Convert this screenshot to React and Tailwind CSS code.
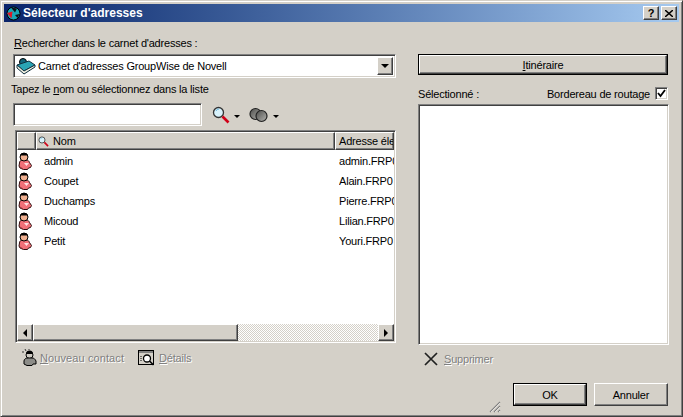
import React from "react";

const FONT = { fontFamily: '"Liberation Sans", Arial, sans-serif' };

// Bords en relief façon Windows 2000
const sunken =
  "border border-t-[#808080] border-l-[#808080] border-r-white border-b-white shadow-[inset_1px_1px_0_#404040,inset_-1px_-1px_0_#d4d0c8]";
const raised =
  "bg-[#d4d0c8] border border-t-white border-l-white border-r-[#404040] border-b-[#404040] shadow-[inset_-1px_-1px_0_#808080]";

const Contact = () => (
  <svg width="16" height="18" viewBox="0 0 16 18">
    <path d="M2.500 11c0-2 1.500-3 3-3h3.500c2 0 3 1 3.500 2.500l2 3-1 2-2 .5-1 1.500h-4l-3.500-1.500-1-2z" fill="#f07078" stroke="#301010" />
    <circle cx="7" cy="5" r="4" fill="#f0b090" stroke="#000" />
    <path d="M3 5a4 4 0 0 1 8 0l-1-1.500h-6z" fill="#000" />
    <path d="M7 11h5l-2.500 3z" fill="#ffe0e0" />
    <path d="M3 15l3 2" stroke="#a03038" />
  </svg>
);

const Magnifier = ({ size = 18 }) => (
  <svg width={size} height={size} viewBox="0 0 18 18">
    <circle cx="6.500" cy="6.500" r="5" fill="#d8f2fb" stroke="#333" strokeWidth="1.300" />
    <path d="M4 5a3 3 0 0 1 3-2" stroke="#6cb8dc" fill="none" />
    <path d="M10.500 10.500l6 6" stroke="#d00018" strokeWidth="2.600" />
  </svg>
);

const Circles = () => (
  <svg width="20" height="16" viewBox="0 0 20 16">
    <defs>
      <linearGradient id="anneau" x1="0" y1="0" x2="1" y2="1">
        <stop offset="0" stopColor="#4c4c4a" />
        <stop offset="1" stopColor="#b4b4b0" />
      </linearGradient>
    </defs>
    <circle cx="6.500" cy="7" r="5.500" fill="url(#anneau)" stroke="#222" strokeWidth="1.200" />
    <circle cx="12.500" cy="9" r="5.500" fill="url(#anneau)" stroke="#222" strokeWidth="1.200" />
  </svg>
);

const Caret = () => <span className="ml-[4px] mt-[3px] w-0 h-0 border-x-[3px] border-x-transparent border-t-[3px] border-t-black" />;

const Arrow = ({ dir }) => (
  <span
    className={
      dir === "left"
        ? "w-0 h-0 border-y-4 border-y-transparent border-r-4 border-r-black"
        : "w-0 h-0 border-y-4 border-y-transparent border-l-4 border-l-black"
    }
  />
);

const DisabledText = ({ children }) => (
  <span className="text-[#808080] [text-shadow:1px_1px_0_#ffffff]">{children}</span>
);

const rows = [
  ["admin", "admin.FRP0"],
  ["Coupet", "Alain.FRP0"],
  ["Duchamps", "Pierre.FRP0"],
  ["Micoud", "Lilian.FRP0"],
  ["Petit", "Youri.FRP0"],
];

export default function App() {
  return (
    <div
      style={FONT}
      className="w-[683px] h-[417px] flex flex-col bg-[#d4d0c8] text-[11px] tracking-[-0.2px] leading-[14px] text-black border border-t-[#d4d0c8] border-l-[#d4d0c8] border-r-[#404040] border-b-[#404040] shadow-[inset_1px_1px_0_#ffffff,inset_-1px_-1px_0_#808080] overflow-hidden"
    >
      {/* Barre de titre */}
      <div className="mx-[3px] mt-[3px] h-[18px] shrink-0 flex items-center bg-gradient-to-r from-[#0a246a] to-[#a6caf0] pl-[2px] pr-[2px]">
        <svg width="15" height="15" viewBox="0 0 15 15">
          <circle cx="7.500" cy="7.500" r="6.500" fill="#18a8b8" stroke="#000" />
          <path d="M1 7l5.500-1.500-1 7z" fill="#e01828" />
          <path d="M5 1.500l6 1-2 4z" fill="#101018" />
          <path d="M9 9l4.500-1-2 4z" fill="#101018" />
        </svg>
        <span className="ml-[2px] flex-1 text-white font-bold text-[12px] tracking-normal">Sélecteur d'adresses</span>
        <div className={`w-4 h-[14px] flex items-center justify-center text-[11px] font-bold ${raised}`}>?</div>
        <div className={`ml-[2px] w-4 h-[14px] flex items-center justify-center ${raised}`}>
          <svg width="8" height="7" viewBox="0 0 8 7">
            <path d="M0 0l8 7M8 0l-8 7" stroke="#000" strokeWidth="1.500" />
          </svg>
        </div>
      </div>

      <div className="flex-1 flex pl-[12px] pr-[13px] pt-[14px] relative">
        {/* Colonne gauche */}
        <div className="w-[383px] flex flex-col">
          <div className="ml-[1px] h-[14px]">
            <span className="underline">R</span>echercher dans le carnet d'adresses :
          </div>
          <div className={`mt-[4px] h-6 flex items-center bg-white pl-[2px] pr-[2px] ${sunken}`}>
            <svg width="20" height="18" viewBox="0 0 20 18">
              <circle cx="7" cy="5" r="3.500" fill="#12667c" stroke="#000" />
              <path d="M1 8l7 6 11-6-6-4z" fill="#2aa4b4" stroke="#103040" />
              <path d="M1 8v3l7 6 11-7v-2l-11 6z" fill="#f0f0e0" stroke="#103040" />
            </svg>
            <span className="ml-[2px] flex-1">Carnet d'adresses GroupWise de Novell</span>
            <div className={`w-4 h-[18px] flex items-center justify-center ${raised}`}>
              <span className="w-0 h-0 border-x-4 border-x-transparent border-t-4 border-t-black" />
            </div>
          </div>
          <div className="mt-[4px] -ml-[2px] h-[14px]">
            Tapez le <span className="underline">n</span>om ou sélectionnez dans la liste
          </div>
          <div className="mt-[7px] flex items-center">
            <div className={`w-[189px] h-[23px] bg-white ${sunken}`} />
            <div className="ml-[10px] flex items-center">
              <Magnifier />
              <Caret />
            </div>
            <div className="ml-[9px] flex items-center">
              <Circles />
              <Caret />
            </div>
          </div>

          {/* Liste */}
          <div className={`mt-[4px] ml-[2px] h-[213px] flex flex-col bg-white ${sunken}`}>
            <div className="mx-[1px] mt-[1px] h-[18px] shrink-0 flex">
              <div className={`w-[19px] ${raised}`} />
              <div className={`flex-1 flex items-center pl-[1px] ${raised}`}>
                <Magnifier size={11} />
                <span className="ml-[4px]">Nom</span>
              </div>
              <div className={`w-[59px] pl-[3px] flex items-center overflow-hidden whitespace-nowrap ${raised}`}>
                Adresse électronique
              </div>
            </div>
            <div className="flex-1 mx-[1px] pt-[1px]">
              {rows.map(([name, mail]) => (
                <div key={name} className="h-5 flex items-center overflow-hidden whitespace-nowrap">
                  <div className="w-[27px] shrink-0">
                    <Contact />
                  </div>
                  <div className="w-[295px] shrink-0">{name}</div>
                  <div className="flex-1 overflow-hidden">{mail}</div>
                </div>
              ))}
            </div>
            <div className="mx-[1px] mb-[1px] h-[17px] shrink-0 flex bg-[repeating-conic-gradient(#d4d0c8_0_25%,#ffffff_0_50%)] bg-[length:2px_2px]">
              <div className={`w-4 flex items-center justify-center ${raised}`}>
                <Arrow dir="left" />
              </div>
              <div className={`w-[205px] ${raised}`} />
              <div className="flex-1" />
              <div className={`w-4 flex items-center justify-center ${raised}`}>
                <Arrow dir="right" />
              </div>
            </div>
          </div>

          {/* Actions de la liste */}
          <div className="mt-[5px] ml-[9px] h-5 flex items-center">
            <svg width="16" height="18" viewBox="0 0 16 18">
              <circle cx="7.500" cy="6" r="3.500" fill="#d0ccc4" stroke="#000" />
              <path d="M4 5a3.500 3.500 0 0 1 7 0z" fill="#000" />
              <path d="M2 12c0-2 2-3 4-3h4c2 0 3 1 4 3v3h-3l-1 1.500h-5l-3-1.500z" fill="#8c8c88" stroke="#000" />
              <path d="M3 0l1 2M7 0v1M0 3l2 0" stroke="#333" />
            </svg>
            <span className="ml-[2px] tracking-[0.1px]">
              <DisabledText>
                <span className="underline">N</span>ouveau contact
              </DisabledText>
            </span>
            <svg className="ml-[14px]" width="17" height="16" viewBox="0 0 17 16">
              <rect x="0.500" y="0.500" width="15" height="14" fill="#d4d0c8" stroke="#000" />
              <rect x="1" y="1" width="14" height="2" fill="#808080" />
              <circle cx="9" cy="8.500" r="3.500" fill="#fff" stroke="#000" strokeWidth="1.300" />
              <path d="M11.500 11l4 4" stroke="#000" strokeWidth="1.600" />
              <path d="M3 6v5" stroke="#000" strokeDasharray="1 1" />
            </svg>
            <span className="ml-[4px]">
              <DisabledText>
                <span className="underline">D</span>étails
              </DisabledText>
            </span>
          </div>
        </div>

        {/* Colonne droite */}
        <div className="ml-[22px] w-[251px] flex flex-col">
          <div className="mt-[18px] w-[250px] h-[21px] border border-black">
            <div className={`h-full flex items-center justify-center ${raised}`}>
              <span>
                <span className="underline">I</span>tinéraire
              </span>
            </div>
          </div>
          <div className="mt-[10px] h-[17px] flex items-center">
            <span className="flex-1">Sélectionné :</span>
            <span>Bordereau de routage</span>
            <div className={`ml-[5px] mr-[1px] w-[13px] h-[13px] bg-white flex items-center justify-center ${sunken}`}>
              <svg width="9" height="9" viewBox="0 0 9 9">
                <path d="M1 4l2.500 3L8 1" stroke="#000" strokeWidth="1.800" fill="none" />
              </svg>
            </div>
          </div>
          <div className={`mt-[2px] h-[241px] bg-white ${sunken}`} />
          <div className="mt-[4px] ml-[6px] h-5 flex items-center">
            <svg width="14" height="14" viewBox="0 0 14 14">
              <path d="M1 1l12 12M13 1l-12 12" stroke="#202020" strokeWidth="1.700" />
            </svg>
            <span className="ml-[6px]">
              <DisabledText>
                <span className="underline">S</span>upprimer
              </DisabledText>
            </span>
          </div>
          <div className="mt-[14px] flex justify-end gap-[7px] pr-[1px]">
            <div className="w-[74px] h-[23px] border border-black">
              <div className={`h-full flex items-center justify-center ${raised}`}>OK</div>
            </div>
            <div className={`w-[74px] h-[23px] flex items-center justify-center ${raised}`}>Annuler</div>
          </div>
        </div>

        {/* Poignée de redimensionnement */}
        <svg className="absolute left-[488px] bottom-[3px]" width="12" height="12" viewBox="0 0 12 12">
          <path d="M1 11L11 1M5 11l6-6M9 11l2-2" stroke="#808080" strokeWidth="1.200" />
          <path d="M2 11L11 2M6 11l5-5M10 11l1-1" stroke="#ffffff" strokeWidth="0.600" />
        </svg>
      </div>
    </div>
  );
}
